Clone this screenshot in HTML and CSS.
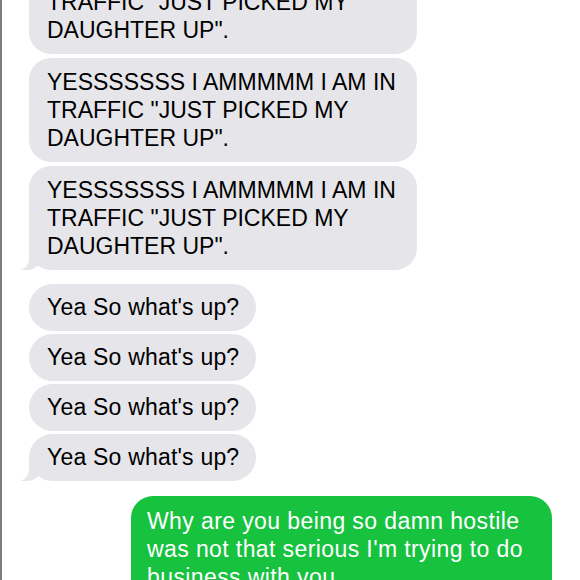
FILE: index.html
```html
<!DOCTYPE html>
<html lang="en">
<head>
<meta charset="utf-8">
<title>Messages</title>
<link rel="stylesheet" href="styles.css">
</head>
<body>
<div class="thread">
  <div class="group incoming">
    <div class="bubble big">YESSSSSSS I AMMMMM I AM IN TRAFFIC "JUST PICKED MY DAUGHTER UP".</div>
    <div class="bubble big">YESSSSSSS I AMMMMM I AM IN TRAFFIC "JUST PICKED MY DAUGHTER UP".</div>
    <div class="bubble big tail">YESSSSSSS I AMMMMM I AM IN TRAFFIC "JUST PICKED MY DAUGHTER UP".</div>
  </div>
  <div class="group incoming">
    <div class="bubble small">Yea So what's up?</div>
    <div class="bubble small">Yea So what's up?</div>
    <div class="bubble small">Yea So what's up?</div>
    <div class="bubble small tail">Yea So what's up?</div>
  </div>
  <div class="group outgoing">
    <div class="bubble sent">Why are you being so damn hostile was not that serious I'm trying to do business with you</div>
  </div>
</div>
</body>
</html>
```
FILE: styles.css
```css
html, body {
  margin: 0;
  padding: 0;
  height: 580px;
  overflow: hidden;
  background: #ffffff;
}

body {
  font-family: "Liberation Sans", Arial, sans-serif;
  border-left: 2px solid #7d7d7d;
  box-sizing: border-box;
}

.thread {
  display: flex;
  flex-direction: column;
  gap: 14px;
  margin-top: -50px;
  padding-left: 27px;
  padding-right: 28px;
}

.group {
  display: flex;
  flex-direction: column;
  gap: 4px;
}

.group.incoming { align-items: flex-start; }
.group.outgoing { align-items: flex-end; margin-top: 1px; }

.bubble {
  position: relative;
  font-size: 23px;
  line-height: 28px;
  color: #000;
  background: #e5e5ea;
  border-radius: 22px;
  box-sizing: border-box;
}

.bubble.big {
  width: 388px;
  padding: 10px 16px 10px 18px;
}

.bubble.small {
  padding: 9px 17px 10px 18px;
  border-radius: 24px;
  letter-spacing: 0.2px;
}

.group.incoming:nth-child(2) { gap: 3px; }

.bubble.sent {
  width: 421px;
  padding: 11px 14px 10px 16px;
  background: #17c23f;
  color: #ffffff;
  letter-spacing: 0.4px;
}

.bubble.tail::before {
  content: "";
  position: absolute;
  bottom: 0;
  left: -8px;
  width: 22px;
  height: 20px;
  background: #e5e5ea;
  border-bottom-right-radius: 16px;
}

.bubble.tail::after {
  content: "";
  position: absolute;
  bottom: 0;
  left: -11px;
  width: 11px;
  height: 21px;
  background: #ffffff;
  border-bottom-right-radius: 11px;
}
```
